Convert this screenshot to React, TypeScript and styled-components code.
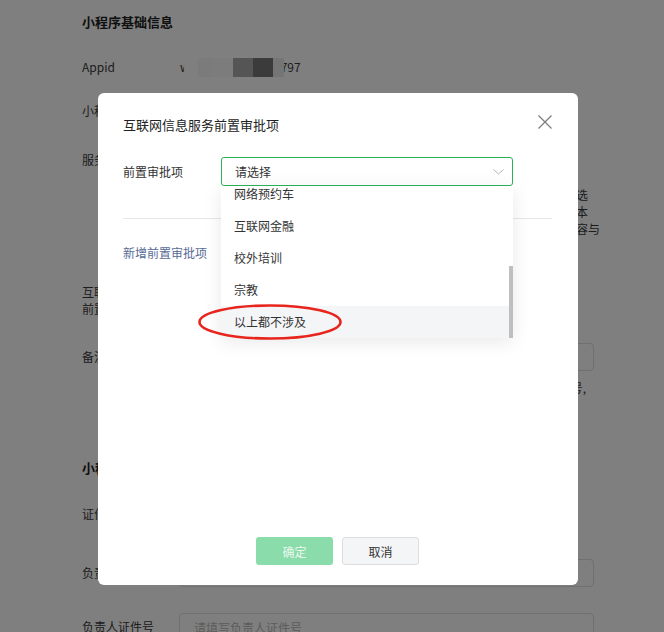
import { type ReactNode, useLayoutEffect, useRef } from 'react'
import styled, { createGlobalStyle } from 'styled-components'

const QUALIFICATIONS = [
  '新闻',
  '出版',
  '药品和医疗器械',
  '文化',
  '广播电影电视节目',
  '网络预约车',
  '互联网金融',
  '校外培训',
  '宗教',
  '以上都不涉及',
]

const ACTIVE_ITEM = '以上都不涉及'
const OPTION_HEIGHT = 32
const LIST_HEIGHT = 152

const MOSAIC = [
  { w: 14, c: '#ffffff' },
  { w: 15, c: '#f6f6f6' },
  { w: 20, c: '#f8f8f8' },
  { w: 20, c: '#ababab' },
  { w: 20, c: '#777777' },
  { w: 11, c: '#eaeaea' },
]

const GlobalStyle = createGlobalStyle`
  html, body {
    margin: 0;
    padding: 0;
    background: #fff;
    overflow: hidden;
  }
  body {
    font-family: "Noto Sans CJK SC", "Liberation Sans", sans-serif;
    -webkit-font-smoothing: antialiased;
  }
  * {
    box-sizing: border-box;
  }
`

const App = (): ReactNode => {
  const listRef = useRef<HTMLDivElement>(null)
  const contentHeight = QUALIFICATIONS.length * OPTION_HEIGHT
  const thumbHeight = (LIST_HEIGHT * LIST_HEIGHT) / contentHeight

  useLayoutEffect(() => {
    if (listRef.current) listRef.current.scrollTop = listRef.current.scrollHeight
  }, [])

  return (
    <>
      <GlobalStyle />
      <Page>
        <SectionTitle $mt={12}>小程序基础信息</SectionTitle>

        <Row $mt={25}>
          <Label>Appid</Label>
          <Value>
            w
            <Mosaic>
              {MOSAIC.map((m, i) => (
                <MosaicCell key={i} style={{ width: m.w, background: m.c }} />
              ))}
            </Mosaic>
            797
          </Value>
        </Row>

        <Row $mt={24}>
          <Label>小程序名称</Label>
          <Value>示例小程序</Value>
        </Row>

        <Row $mt={29}>
          <Label>服务类目</Label>
          <div>
            <Value>工具 &gt; 信息查询</Value>
            <Desc $mt={16}>
              <DescLine>请根据小程序实际提供的服务内容与功能，在下方服务类目列表中仔细准确选</DescLine>
              <DescLine>择，所选类目要与小程序主体的资质保持一致，并上传对应资质证明文件副本</DescLine>
              <DescLine>审核通过后方可发布上线，请勿填写与实际经营不符的信息，以免影响其内容与</DescLine>
              <DescLine>类目的匹配。</DescLine>
            </Desc>
          </div>
        </Row>

        <Row $mt={29}>
          <WrapLabel>互联网信息服务前置审批项</WrapLabel>
          <Value>以上都不涉及</Value>
        </Row>

        <Row $mt={26}>
          <Label $lh={28}>备注</Label>
          <div>
            <Input placeholder="请填写备注信息" />
            <Desc $mt={8}>
              <DescLine>如小程序涉及服务内容，请在此处补充说明并提供1项相关许可证或批准文号,</DescLine>
            </Desc>
          </div>
        </Row>

        <SectionTitle $mt={62}>小程序备案主体信息</SectionTitle>

        <Row $mt={26}>
          <Label>证件类型</Label>
          <Value>居民身份证</Value>
        </Row>

        <Row $mt={35}>
          <Label $lh={28}>负责人姓名</Label>
          <Input placeholder="请填写负责人姓名" />
        </Row>

        <Row $mt={26}>
          <Label $lh={28}>负责人证件号</Label>
          <Input placeholder="请填写负责人证件号" />
        </Row>
      </Page>

      <Overlay>
        <Modal>
          <ModalHeader>
            <ModalTitle>互联网信息服务前置审批项</ModalTitle>
            <CloseButton aria-label="关闭">
              <svg width="14" height="14" viewBox="0 0 14 14" fill="none">
                <path d="M0.5 0.5L13.5 13.5M13.5 0.5L0.5 13.5" stroke="#7a7a7a" strokeWidth="1.2" />
              </svg>
            </CloseButton>
          </ModalHeader>

          <FormRow>
            <FormLabel>前置审批项</FormLabel>
            <SelectWrap>
              <SelectBox>
                <span>请选择</span>
                <svg width="11" height="6" viewBox="0 0 11 6" fill="none">
                  <path d="M0.5 0.5L5.5 5L10.5 0.5" stroke="#b4b4b4" strokeWidth="1" />
                </svg>
              </SelectBox>
              <Dropdown>
                <OptionList ref={listRef}>
                  {QUALIFICATIONS.map((q) => (
                    <Option key={q} $active={q === ACTIVE_ITEM}>
                      {q}
                    </Option>
                  ))}
                </OptionList>
                <ScrollTrack>
                  <ScrollThumb style={{ height: thumbHeight }} />
                </ScrollTrack>
              </Dropdown>
              <Circle width="148" height="38" viewBox="0 0 148 38">
                <ellipse cx="74" cy="19" rx="70.5" ry="16.5" stroke="#e8251d" strokeWidth="2.6" fill="none" />
              </Circle>
            </SelectWrap>
          </FormRow>

          <Divider />

          <AddLink>新增前置审批项</AddLink>

          <Footer>
            <PrimaryButton disabled>确定</PrimaryButton>
            <DefaultButton>取消</DefaultButton>
          </Footer>
        </Modal>
      </Overlay>
    </>
  )
}

export default App

const Page = styled.div`
  width: 664px;
  height: 632px;
  padding-left: 82px;
  overflow: hidden;
  color: #3a3a3a;
  font-size: 12px;
`

const SectionTitle = styled.h2<{ $mt: number }>`
  margin: ${(p) => p.$mt}px 0 0;
  font-size: 13px;
  line-height: 20px;
  font-weight: 600;
  color: #222;
`

const Row = styled.div<{ $mt: number }>`
  display: grid;
  grid-template-columns: 97px 415px;
  align-items: start;
  margin-top: ${(p) => p.$mt}px;
`

const Label = styled.div<{ $lh?: number }>`
  font-size: 12px;
  line-height: ${(p) => p.$lh ?? 20}px;
  white-space: nowrap;
`

const WrapLabel = styled.div`
  width: 84px;
  font-size: 12px;
  line-height: 17px;
`

const Value = styled.div`
  display: flex;
  align-items: center;
  padding-left: 1px;
  font-size: 12px;
  line-height: 20px;
  color: #3a3a3a;
`

const Mosaic = styled.span`
  position: relative;
  z-index: 1;
  display: inline-flex;
  height: 19px;
  margin: 0 -3px 0 -6px;
  border-radius: 9px 0 0 9px;
  overflow: hidden;
  filter: blur(0.6px);
`

const MosaicCell = styled.span`
  display: block;
  height: 100%;
`

const Desc = styled.div<{ $mt: number }>`
  margin-top: ${(p) => p.$mt}px;
  padding-left: 1px;
`

const DescLine = styled.div`
  font-size: 12px;
  line-height: 17px;
  white-space: nowrap;
  color: #3a3a3a;
`

const Input = styled.input`
  display: block;
  width: 415px;
  height: 28px;
  padding: 0 14px;
  border: 1px solid #e0e0e0;
  border-radius: 4px;
  background: #fff;
  font-family: inherit;
  font-size: 12px;
  color: #333;
  outline: none;

  &::placeholder {
    color: #b8b8b8;
  }
`

const Overlay = styled.div`
  position: fixed;
  inset: 0;
  z-index: 10;
  background: rgba(0, 0, 0, 0.5);
`

const Modal = styled.div`
  display: flex;
  flex-direction: column;
  width: 480px;
  height: 492px;
  margin: 93px 0 0 98px;
  padding: 22px 26px 20px 25px;
  background: #fff;
  border-radius: 6px;
`

const ModalHeader = styled.div`
  display: flex;
  justify-content: space-between;
  align-items: flex-start;
`

const ModalTitle = styled.h3`
  margin: 0;
  font-size: 13px;
  line-height: 20px;
  font-weight: 400;
  color: #222;
`

const CloseButton = styled.button`
  display: flex;
  width: 14px;
  height: 14px;
  padding: 0;
  border: none;
  background: none;
  cursor: pointer;
`

const FormRow = styled.div`
  display: flex;
  align-items: center;
  margin-top: 22px;
`

const FormLabel = styled.div`
  width: 98px;
  font-size: 12px;
  line-height: 20px;
  color: #333;
`

const SelectWrap = styled.div`
  position: relative;
  width: 292px;
`

const SelectBox = styled.div`
  display: flex;
  align-items: center;
  justify-content: space-between;
  height: 29px;
  padding: 0 8px 0 13px;
  border: 1px solid #2bb35c;
  border-radius: 3px;
  background: #fff;
  font-size: 12px;
  color: #333;
`

const Dropdown = styled.div`
  position: absolute;
  top: 29px;
  left: 0;
  z-index: 2;
  display: flex;
  width: 292px;
  height: ${LIST_HEIGHT}px;
  background: #fff;
  box-shadow: 0 4px 18px rgba(0, 0, 0, 0.09);
`

const OptionList = styled.div`
  flex: 1;
  min-width: 0;
  overflow: hidden;
`

const Option = styled.div<{ $active: boolean }>`
  height: ${OPTION_HEIGHT}px;
  padding-left: 13px;
  font-size: 12px;
  line-height: ${OPTION_HEIGHT}px;
  color: #333;
  background: ${(p) => (p.$active ? '#f4f5f7' : '#fff')};
  white-space: nowrap;
`

const ScrollTrack = styled.div`
  display: flex;
  flex-direction: column;
  justify-content: flex-end;
  width: 4px;
`

const ScrollThumb = styled.div`
  width: 4px;
  background: #bfbfbf;
`

const Circle = styled.svg`
  position: absolute;
  left: -25px;
  top: 146px;
  z-index: 3;
  overflow: visible;
  pointer-events: none;
`

const Divider = styled.div`
  height: 1px;
  margin-top: 32px;
  background: #e7e7e7;
`

const AddLink = styled.a`
  margin-top: 24px;
  font-size: 12px;
  line-height: 20px;
  color: #576b95;
  cursor: pointer;
`

const Footer = styled.div`
  display: flex;
  justify-content: center;
  gap: 9px;
  margin-top: auto;
`

const ButtonBase = styled.button`
  width: 77px;
  height: 28px;
  border-radius: 3px;
  font-family: inherit;
  font-size: 12px;
  cursor: pointer;
`

const PrimaryButton = styled(ButtonBase)`
  border: none;
  background: #8bdcab;
  color: #e9f8ef;

  &:disabled {
    cursor: not-allowed;
  }
`

const DefaultButton = styled(ButtonBase)`
  border: 1px solid #dedede;
  background: #f4f5f6;
  color: #333;
`
